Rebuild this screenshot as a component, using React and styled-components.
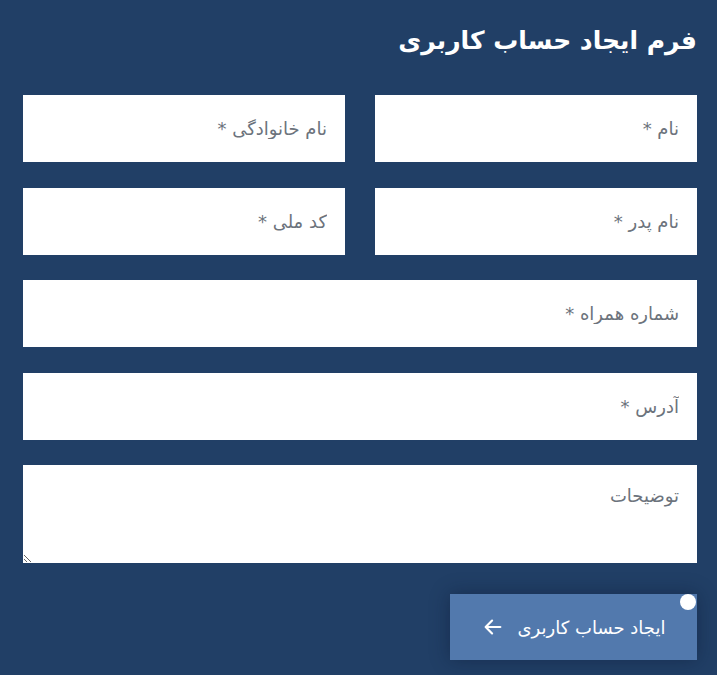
import React from "react";
import styled, { createGlobalStyle } from "styled-components";

const GlobalStyle = createGlobalStyle`
  html, body {
    margin: 0;
    padding: 0;
    background-color: #213f66;
  }
  * {
    box-sizing: border-box;
  }
`;

const Page = styled.div`
  direction: rtl;
  min-height: 675px;
  background-color: #213f66;
  padding: 15px 20px 0 23px;
  font-family: "DejaVu Sans", "Noto Sans", sans-serif;
`;

const Title = styled.h1`
  margin: 0 0 28px 0;
  color: #ffffff;
  font-size: 25px;
  font-weight: bold;
  line-height: 52px;
`;

const Grid = styled.div`
  display: grid;
  grid-template-columns: 1fr 1fr;
  column-gap: 30px;
  row-gap: 25.5px;
`;

const Field = styled.input`
  grid-column: ${(p) => (p.$wide ? "1 / span 2" : "auto")};
  height: 67px;
  border: none;
  outline: none;
  background: #ffffff;
  padding: 0 18px;
  font-family: "DejaVu Sans", "Noto Sans", sans-serif;
  font-size: 18px;
  color: #333;
  &::placeholder {
    color: #6c737c;
  }
`;

const Notes = styled.textarea`
  grid-column: 1 / span 2;
  height: 98px;
  border: none;
  outline: none;
  background: #ffffff;
  padding: 20px 18px;
  font-family: "DejaVu Sans", "Noto Sans", sans-serif;
  font-size: 18px;
  display: block;
  &::placeholder {
    color: #6c737c;
  }
`;

const Actions = styled.div`
  display: flex;
  justify-content: flex-start;
  margin-top: 31px;
`;

const SubmitButton = styled.button`
  position: relative;
  width: 247px;
  height: 66px;
  border: none;
  background-color: #5279ad;
  color: #ffffff;
  font-family: "DejaVu Sans", "Noto Sans", sans-serif;
  font-size: 18px;
  font-weight: normal;
  display: flex;
  align-items: center;
  justify-content: center;
  gap: 14px;
  box-shadow: 0 0 18px rgba(10, 25, 50, 0.45);
  cursor: pointer;
`;

const Dot = styled.span`
  position: absolute;
  top: 0;
  left: 230px;
  width: 16px;
  height: 16px;
  border-radius: 50%;
  background: #ffffff;
`;

function ArrowLeft() {
  return (
    <svg width="22" height="22" viewBox="0 0 24 24" fill="none" stroke="#fff" strokeWidth="2.4" strokeLinecap="round" strokeLinejoin="round">
      <path d="M20 12H4.5" />
      <path d="M11 5l-7 7 7 7" />
    </svg>
  );
}

export default function App() {
  return (
    <>
      <GlobalStyle />
      <Page>
        <Title>فرم ایجاد حساب کاربری</Title>
        <Grid>
          <Field placeholder="نام *" />
          <Field placeholder="نام خانوادگی *" />
          <Field placeholder="نام پدر *" />
          <Field placeholder="کد ملی *" />
          <Field $wide placeholder="شماره همراه *" />
          <Field $wide placeholder="آدرس *" />
          <Notes placeholder="توضیحات" />
        </Grid>
        <Actions>
          <SubmitButton>
            <span>ایجاد حساب کاربری</span>
            <ArrowLeft />
            <Dot />
          </SubmitButton>
        </Actions>
      </Page>
    </>
  );
}
